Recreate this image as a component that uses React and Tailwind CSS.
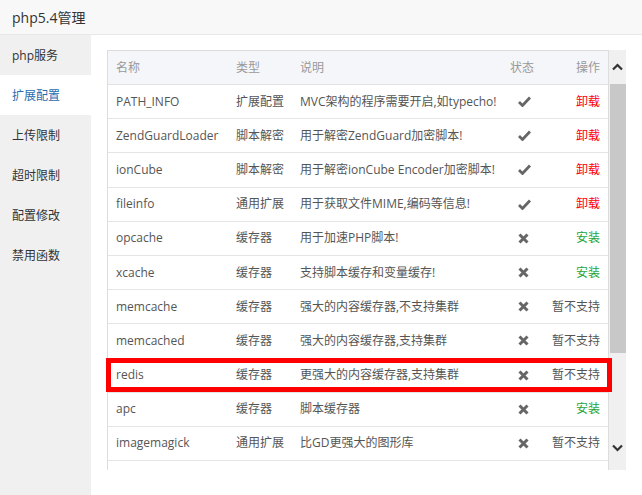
import React from "react";

const F = { fontFamily: '"Open Sans","Noto Sans CJK SC",sans-serif' };

const rows = [
  ["PATH_INFO", "扩展配置", "MVC架构的程序需要开启,如typecho!", true, "卸载"],
  ["ZendGuardLoader", "脚本解密", "用于解密ZendGuard加密脚本!", true, "卸载"],
  ["ionCube", "脚本解密", "用于解密ionCube Encoder加密脚本!", true, "卸载"],
  ["fileinfo", "通用扩展", "用于获取文件MIME,编码等信息!", true, "卸载"],
  ["opcache", "缓存器", "用于加速PHP脚本!", false, "安装"],
  ["xcache", "缓存器", "支持脚本缓存和变量缓存!", false, "安装"],
  ["memcache", "缓存器", "强大的内容缓存器,不支持集群", false, "暂不支持"],
  ["memcached", "缓存器", "强大的内容缓存器,支持集群", false, "暂不支持"],
  ["redis", "缓存器", "更强大的内容缓存器,支持集群", false, "暂不支持"],
  ["apc", "缓存器", "脚本缓存器", false, "安装"],
  ["imagemagick", "通用扩展", "比GD更强大的图形库", false, "暂不支持"],
];

const menu = ["php服务", "扩展配置", "上传限制", "超时限制", "配置修改", "禁用函数"];

function Check() {
  return (
    <svg width="13" height="11" viewBox="0 0 13 11">
      <path d="M1 6 L4.5 9.5 L12 1.5" fill="none" stroke="#666" strokeWidth="2.8" strokeLinejoin="miter" />
    </svg>
  );
}
function Cross() {
  return (
    <svg width="11" height="11" viewBox="0 0 11 11">
      <path d="M1.5 1.5 L9.5 9.5 M9.5 1.5 L1.5 9.5" stroke="#666" strokeWidth="3" strokeLinecap="butt" />
    </svg>
  );
}

function Action({ a }) {
  if (a === "卸载") return <span className="text-[#ff0000]">{a}</span>;
  if (a === "安装") return <span className="text-[#20a53a]">{a}</span>;
  return <span className="text-[#555]">{a}</span>;
}

const cols = "grid grid-cols-[120px_64px_210px_38px_68px]";

export default function App() {
  return (
    <div className="relative w-[642px] h-[495px] bg-white overflow-hidden" style={F}>
      <div className="h-[35px] bg-[#f8f8f8] border-b border-[#e8e8e8] flex items-center pl-[12px] text-[14px] text-[#333]">
        php5.4管理
      </div>
      <div className="flex h-[460px]">
        <div className="w-[91px] bg-[#f0f0f0] flex flex-col">
          {menu.map((m, i) => (
            <div
              key={m}
              className={
                i === 1
                  ? "h-[40px] flex items-center pl-[12px] pt-[1px] text-[12px] bg-white text-[#2a6db0]"
                  : "h-[40px] flex items-center pl-[12px] pt-[1px] text-[12px] text-[#333]"
              }
            >
              {m}
            </div>
          ))}
        </div>
        <div className="pl-[16px] pt-[15px]">
          <div className="flex h-[420px] w-[519px] overflow-hidden">
            <div className="w-[502px] border border-[#dddddd] border-b-0 text-[12px] text-[#555]">
              <div className={`${cols} h-[34px] items-center bg-[#f5f6fa] border-b border-[#e2e2e2] text-[#999]`}>
                <div className="pl-[8px]">名称</div>
                <div className="pl-[8px]">类型</div>
                <div className="pl-[8px]">说明</div>
                <div className="pl-[8px]">状态</div>
                <div className="pr-[8px] text-right">操作</div>
              </div>
              {rows.map((r) => (
                <div key={r[0]} className={`${cols} h-[34.2px] items-center border-b border-[#e5e5e5]`}>
                  <div className="pl-[8px] whitespace-nowrap">{r[0]}</div>
                  <div className="pl-[8px] whitespace-nowrap">{r[1]}</div>
                  <div className="pl-[8px] whitespace-nowrap">{r[2]}</div>
                  <div className="pl-[16px] flex items-center">{r[3] ? <Check /> : <Cross />}</div>
                  <div className="pr-[8px] text-right whitespace-nowrap">
                    <Action a={r[4]} />
                  </div>
                </div>
              ))}
              <div className="h-[34px]" />
            </div>
            <div className="w-[17px] bg-[#f0f0f0] flex flex-col">
              <div className="h-[34px] flex items-center justify-center">
                <svg width="11" height="8" viewBox="0 0 11 8">
                  <path d="M1 6.5 L5.5 2 L10 6.5" fill="none" stroke="#333" strokeWidth="2.2" />
                </svg>
              </div>
              <div className="h-[269px] bg-[#c8c8c8] ml-[1px]" />
              <div className="flex-1" />
              <div className="h-[44px] flex items-center justify-center">
                <svg width="11" height="8" viewBox="0 0 11 8">
                  <path d="M1 1.5 L5.5 6 L10 1.5" fill="none" stroke="#333" strokeWidth="2.2" />
                </svg>
              </div>
            </div>
          </div>
        </div>
      </div>
      <div className="absolute left-[106px] top-[358px] w-[506px] h-[34px] border-[5px] border-[#ff0000]" />
    </div>
  );
}
